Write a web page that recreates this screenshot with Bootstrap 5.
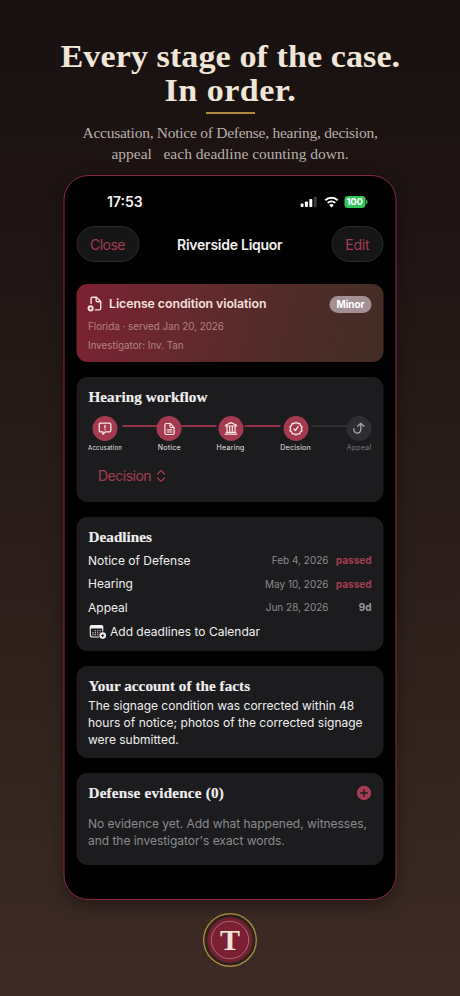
<!DOCTYPE html>
<html lang="en">
<head>
<meta charset="utf-8">
<meta name="viewport" content="width=device-width, initial-scale=1">
<title>Riverside Liquor</title>
<link href="https://cdn.jsdelivr.net/npm/bootstrap@5.3.0/dist/css/bootstrap.min.css" rel="stylesheet">
<style>
body{font-family:Inter,sans-serif;background:linear-gradient(180deg,#181111 0,#1e1413 20%,#2e201b 62%,#3d2b25 100%);width:460px;height:996px;overflow:hidden;color:#f3f1f2}
.serif,h1,h2{font-family:"Liberation Serif",serif}
h1{font-size:31px;font-weight:700;line-height:34px;color:#f0e6d8;padding-top:40px;transform:scaleX(1.1);letter-spacing:.06px;white-space:nowrap}
h1 .second{letter-spacing:.4px}
.rule{width:49px;height:2px;background:#b28c3e;margin-top:4px}
.sub{font-size:15.5px;line-height:20.5px;color:#b9afa9;margin-top:9px;height:52px}
.sub .first{letter-spacing:-.26px}
.phone{width:333px;height:725px;border:1.5px solid #8a2a41;border-radius:25px;background:#000;padding:0 12px;box-shadow:0 6px 16px rgba(0,0,0,.35);transform:translateX(-.5px)}
.status{height:50px;padding:2px 16px 0 31px}
.status b{font-size:14px;font-weight:600;line-height:44px}
.wifi{margin:0 5px 0 6px}
.batt{width:21px;height:12px;border-radius:3.5px;background:#33c558;font-size:9.5px;font-weight:700;line-height:12px;letter-spacing:-.3px}
.topbar{height:36px}
.pill{height:36.5px;border-radius:19px;background:#171617;border:1px solid #2b2a2b;color:#a63c54;font-size:14px;letter-spacing:-.5px;padding:0}
.pill.wide{width:63px}.pill.slim{width:51.5px;letter-spacing:-.24px}
.title{font-size:14px;font-weight:600;letter-spacing:-.26px;margin-left:-11px}
.panel{background:#1c1c1e;border-radius:11px;padding:0 11.5px 0 12px;margin-top:15px;color:#f0eff0}
.panel h2{font-size:14.3px;font-weight:700;line-height:18px;margin:0;padding-top:11px;letter-spacing:.04px;transform:scaleX(1.06);transform-origin:left;-webkit-text-stroke:.15px currentColor}
.panel .count{letter-spacing:.2px}
.hero{height:78px;margin-top:22px;background:linear-gradient(105deg,#7d2133 0,#66292f 35%,#512b29 65%,#422d25 100%)}
.hero .head{height:20px;margin-top:10px}
.hero .name{font-size:12.3px;font-weight:600;letter-spacing:-.05px;color:#f4e3dc}
.minor{width:42px;height:17px;line-height:17px;border-radius:9px;background:#a38f94;color:#fff;font-size:10px;font-weight:700;letter-spacing:-.05px}
.meta{font-size:9.8px;line-height:18.5px;color:#b1837f}
.flowbox{height:125px}
.track{padding-top:10px;height:53px}
.bar{height:2px;background:#95324a;margin-top:8.5px;flex:1 1 0}
.bar.off{background:#303032}
.stage{display:flex;flex-direction:column;align-items:center}
.dot{width:25px;height:25px;border-radius:50%;background:#a33a50;flex:none;margin:0 -1px}
.dot.off{background:#2e2e31}
.stage span{font-size:7px;line-height:14px;letter-spacing:.27px;white-space:nowrap;color:#e8e6e7}
.stage .tiny{font-size:6px;letter-spacing:.24px}
.stage .dim{color:#79797d}
.picker{font-size:14px;letter-spacing:-.5px;color:#a63c54;padding:7px 0 0 10px;line-height:20px}
.due{height:134px}
.due h2{margin-bottom:3px}
.line{height:23.6px;font-size:12px}
.line .date{font-size:10px;color:#8b8b8f;width:64px;margin-right:7px;text-align:right;white-space:nowrap}
.line .tag{font-size:10px;font-weight:700;width:36px;text-align:right;color:#a63c54}
.line .left{color:#98989c}
.body12{font-size:12px;line-height:16.8px;white-space:nowrap;margin:0;padding-top:3px}
.quiet{color:#8b8b8f;padding-top:14px;letter-spacing:-.03px}
.note{height:92px}
.seal{margin-top:12px;height:54px}
</style>
</head>
<body>
<header class="text-center d-flex flex-column align-items-center">
<h1 class="m-0">Every stage of the case.<br><span class="second">In order.</span></h1>
<div class="rule"></div>
<div class="sub serif"><span class="first">Accusation, Notice of Defense, hearing, decision,</span><br>appeal &nbsp; each deadline counting down.</div>
</header>
<main class="phone mx-auto">
<div class="status d-flex justify-content-between align-items-center"><b>17:53</b>
<div class="d-flex align-items-center">
<svg width="17" height="12" viewBox="0 0 17 12"><g fill="#fff"><rect x="0" y="7.5" width="3" height="3.5" rx=".8"/><rect x="4.4" y="5.5" width="3" height="5.5" rx=".8"/><rect x="8.8" y="3" width="3" height="8" rx=".8"/></g><rect x="13.2" y=".8" width="3" height="10.2" rx=".8" fill="#3a3a3c"/></svg>
<svg class="wifi" width="16" height="12" viewBox="1 0 16 12"><g fill="none" stroke="#fff" stroke-width="2"><path d="M2.8 4.2a8.9 8.9 0 0 1 12.4 0"/><path d="M5.2 6.9a5.5 5.5 0 0 1 7.6 0"/></g><path d="M9 11.4 6.8 9.2a3.1 3.1 0 0 1 4.4 0z" fill="#fff"/></svg>
<div class="batt text-center text-white">100</div>
<svg width="2" height="4" viewBox="0 0 2 4"><path d="M.5 0a2 2 0 0 1 0 4z" fill="#33c558"/></svg>
</div></div>
<nav class="topbar d-flex justify-content-between align-items-center"><button class="btn pill wide">Close</button><div class="title">Riverside Liquor</div><button class="btn pill slim">Edit</button></nav>

<section class="panel hero d-flex flex-column">
<div class="head d-flex align-items-center">
<svg class="me-1" width="17" height="17" viewBox="1.1 0.6 17 17" fill="none" stroke="#f4e3dc" stroke-width="1.4" stroke-linejoin="round" stroke-linecap="round" overflow="visible"><path d="M3.7 8V3.2q0-1.4 1.4-1.4h3.8l4.4 4.3v7q0 1.4-1.4 1.4H8"/><path d="M8.7 2v3q0 1.3 1.3 1.3h3"/><circle cx="3.2" cy="13" r="2.1" stroke-width="1.9"/></svg>
<span class="name">License condition violation</span><span class="minor ms-auto text-center">Minor</span></div>
<div class="meta pt-1">Florida · served Jan 20, 2026</div><div class="meta">Investigator: Inv. Tan</div>
</section>

<section class="panel flowbox"><h2>Hearing workflow</h2>
<div class="track d-flex">
<div class="stage"><div class="dot d-flex align-items-center justify-content-center"><svg width="15" height="15" viewBox="0 0 15 15" fill="none" stroke="#f8e8e4" stroke-width="1.3" stroke-linejoin="round" stroke-linecap="round"><path d="M3 2.2h9q1.3 0 1.3 1.3v6q0 1.3-1.3 1.3H8l-2.6 2.4v-2.4H3q-1.3 0-1.3-1.3v-6Q1.7 2.2 3 2.2z"/><path d="M7.5 4.3v2.6M7.5 8.7v.1"/></svg></div><span class="tiny">Accusation</span></div>
<div class="bar"></div>
<div class="stage"><div class="dot d-flex align-items-center justify-content-center"><svg width="14" height="14" viewBox="0 0 14 14" fill="none" stroke="#f8e8e4" stroke-width="1.2" stroke-linejoin="round" stroke-linecap="round"><path d="M3.8 1.5h3.9l3.9 3.9v5.7q0 1.4-1.4 1.4H3.8q-1.4 0-1.4-1.4V2.9q0-1.4 1.4-1.4z"/><path d="M7.5 1.8v2.5q0 1.3 1.3 1.3h2.5M4.7 7.8h4.6M4.7 10h4.6"/></svg></div><span>Notice</span></div>
<div class="bar"></div>
<div class="stage"><div class="dot d-flex align-items-center justify-content-center"><svg width="15" height="15" viewBox="0 0 15 15" fill="none" stroke="#f8e8e4" stroke-width="1.2" stroke-linejoin="round" stroke-linecap="round"><path d="M2 5V4.2l5.5-2.6L13 4.2V5zM3.5 5.3v5.8M6.2 5.3v5.8M8.8 5.3v5.8M11.5 5.3v5.8M2.7 11.3h9.6M1.6 13.2h11.8"/></svg></div><span>Hearing</span></div>
<div class="bar"></div>
<div class="stage"><div class="dot d-flex align-items-center justify-content-center"><svg width="15" height="15" viewBox="0 0 15 15" fill="none" stroke="#f8e8e4" stroke-width="1.3" stroke-linejoin="round" stroke-linecap="round"><path d="M7.5 1.3l1.7 1.2 2.1-.1.6 2 1.7 1.3-.7 1.9.7 2-1.7 1.2-.6 2.1-2.1-.1-1.7 1.2-1.7-1.2-2.1.1-.6-2.1-1.7-1.2.7-2-.7-1.9 1.7-1.3.6-2 2.1.1z"/><path d="M5.4 7.9l1.5 1.6 2.7-3.8"/></svg></div><span>Decision</span></div>
<div class="bar off"></div>
<div class="stage"><div class="dot off d-flex align-items-center justify-content-center"><svg width="15" height="15" viewBox="0 0 15 15" fill="none" stroke="#a0a0a4" stroke-width="1.4" stroke-linejoin="round" stroke-linecap="round"><path d="M2.3 7.8q0 4.3 3.6 4.3 3.4 0 3.4-4V2.3M6.2 5.2l3.1-3 3.1 3"/></svg></div><span class="dim">Appeal</span></div>
</div>
<div class="picker d-flex align-items-center">Decision <svg class="ms-1" width="11" height="14" viewBox="0 0 11 14" fill="none" stroke="#a63c54" stroke-width="1.2" stroke-linecap="round" stroke-linejoin="round"><path d="M2 5l3.5-3.5L9 5M2 8.8l3.5 3.5L9 8.8"/></svg></div>
</section>

<section class="panel due"><h2>Deadlines</h2>
<div class="line d-flex align-items-center"><span class="me-auto">Notice of Defense</span><span class="date">Feb 4, 2026</span><span class="tag">passed</span></div>
<div class="line d-flex align-items-center"><span class="me-auto">Hearing</span><span class="date">May 10, 2026</span><span class="tag">passed</span></div>
<div class="line d-flex align-items-center"><span class="me-auto">Appeal</span><span class="date">Jun 28, 2026</span><span class="tag left">9d</span></div>
<div class="line d-flex align-items-center"><svg class="me-1" width="18" height="16" viewBox="0 0 18 16"><rect x="1.8" y="1.6" width="12.4" height="11.4" rx="2" fill="none" stroke="#f3f1f2" stroke-width="1.1"/><path d="M1.3 4.6V3q0-2 2-2h9.4q2 0 2 2v1.6z" fill="#f3f1f2"/><path d="M6.2 6.8h6.4M3.8 8.8h8.8M3.8 10.8h6" stroke="#f3f1f2" stroke-width="1.1" stroke-dasharray="1.2 1.2"/><circle cx="14.2" cy="11.6" r="4" fill="#1c1c1e"/><circle cx="14.2" cy="11.6" r="3.3" fill="#f3f1f2"/><path d="M12.7 11.6h3M14.2 10.1v3" stroke="#1c1c1e" stroke-width="1"/></svg>Add deadlines to Calendar</div>
</section>

<section class="panel note"><h2>Your account of the facts</h2><p class="body12">The signage condition was corrected within 48<br>hours of notice; photos of the corrected signage<br>were submitted.</p></section>

<section class="panel note"><div class="d-flex justify-content-between align-items-end"><h2 class="count">Defense evidence (0)</h2><svg width="15" height="18" viewBox="0 0 15 18"><circle cx="7.5" cy="9" r="7.2" fill="#a63c54"/><path d="M7.5 5.7v6.6M4.2 9h6.6" stroke="#1c1c1e" stroke-width="1.4" stroke-linecap="round"/></svg></div><p class="body12 quiet">No evidence yet. Add what happened, witnesses,<br>and the investigator's exact words.</p></section>
</main>
<footer class="seal d-flex justify-content-center"><svg width="56" height="56" viewBox="0 0 56 56"><circle cx="28" cy="28" r="26.3" fill="#2f211d" stroke="#a88a42" stroke-width="1.4"/><circle cx="28" cy="28" r="22.8" fill="#71202f"/><circle cx="28" cy="28" r="18.7" fill="#7b2034" stroke="#b77880" stroke-width=".8"/><text x="28" y="38" text-anchor="middle" font-family="Liberation Serif,serif" font-weight="700" font-size="30" fill="#f0e2d5">T</text></svg></footer>
<script src="https://cdn.jsdelivr.net/npm/bootstrap@5.3.0/dist/js/bootstrap.bundle.min.js"></script>
</body>
</html>
